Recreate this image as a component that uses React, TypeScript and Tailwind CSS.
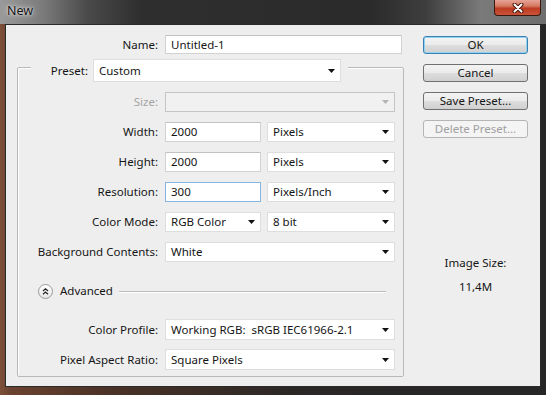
import { ReactNode } from 'react';

const Arrow = ({ disabled }: { disabled?: boolean }) => (
  <svg width="7" height="4" viewBox="0 0 7 4" className="shrink-0">
    <path d="M0 0H7L3.5 4Z" fill={disabled ? '#b4b4b4' : '#111'} />
  </svg>
);

// dropdown box, Photoshop style
const Select = ({ value, width, disabled }: { value?: string; width: string; disabled?: boolean }) => (
  <div
    className={`${width} h-full flex items-center justify-between pl-[5px] pr-[5px] border ${
      disabled ? 'bg-[#f1f1f1] border-[#c4c4c4]' : 'bg-white border-[#dedede]'
    }`}
  >
    <span className="whitespace-pre">{value}</span>
    <Arrow disabled={disabled} />
  </div>
);

const TextBox = ({ value, width, focused }: { value: string; width: string; focused?: boolean }) => (
  <div
    className={`${width} h-full flex items-center pl-[5px] bg-white border ${
      focused ? 'border-[#86b5e6]' : 'border-[#d2d2d2] border-t-[#c2c2c2]'
    }`}
  >
    {value}
  </div>
);

const Row = ({ label, children, disabled, h = 'h-[20px]' }: { label: string; children: ReactNode; disabled?: boolean; h?: string }) => (
  <div className={`flex items-center ${h}`}>
    <span className={`w-[140px] text-right ${disabled ? 'text-[#a5a5a5]' : ''}`}>{label}</span>
    <div className="ml-[7px] h-full flex gap-[6px]">{children}</div>
  </div>
);

const Button = ({ label, primary, disabled }: { label: string; primary?: boolean; disabled?: boolean }) => (
  <div
    className={`w-[105px] h-[18px] flex items-center justify-center rounded-[3px] border bg-[linear-gradient(180deg,#f3f3f3_0%,#ebebeb_48%,#dddddd_52%,#d0d0d0_100%)] ${
      primary
        ? 'border-[#3c7fb1] shadow-[inset_0_0_0_1px_#8fd2f2]'
        : disabled
        ? 'border-[#b5b5b5] text-[#a0a0a0] bg-none bg-[#f4f4f4]'
        : 'border-[#707070]'
    }`}
  >
    {label}
  </div>
);

const App = () => {
  return (
    <div className="w-[546px] h-[395px] flex flex-col overflow-hidden text-[11.5px] text-[#151515] font-['Noto_Sans',sans-serif] bg-[linear-gradient(90deg,#7e5038_0%,#6a4230_2%,#4a3226_20%,#2a2726_55%,#262626_100%)]">
      {/* Title bar */}
      <div className="h-[24px] shrink-0 flex items-start justify-between bg-[linear-gradient(90deg,#9a9a9a_0%,#7a7a7a_8%,#4a4a4a_16%,#2e2e2e_26%,#2b2b2b_68%,#3e3e3e_78%,#7a7a7a_88%,#6e6e6e_100%)]">
        <span className="ml-[7px] mt-[2px] text-[12.5px] text-[#111] [text-shadow:0_0_6px_rgba(255,255,255,0.85),0_0_2px_rgba(255,255,255,0.9)]">
          New
        </span>
        <div className="mr-[5px] w-[47px] h-[16px] flex items-center justify-center rounded-b-[4px] border border-t-0 border-[#3a1810] bg-[linear-gradient(180deg,#e7a496_0%,#d67a64_40%,#bd3c22_55%,#c9533a_100%)]">
          <svg width="12" height="10" viewBox="0 0 12 10">
            <path d="M2.5 1.5L9.5 8.5M9.5 1.5L2.5 8.5" stroke="#4a1a10" strokeWidth="4" strokeLinecap="round" />
            <path d="M2.5 1.5L9.5 8.5M9.5 1.5L2.5 8.5" stroke="#fff" strokeWidth="2" strokeLinecap="round" />
          </svg>
        </div>
      </div>

      {/* Client area */}
      <div className="mx-[5px] mb-[8px] flex-1 flex border border-[#2a2a2a] bg-[#eeeeee]">
        {/* Left column */}
        <div className="w-[398px] pt-[10px] flex flex-col">
          <div className="flex items-center h-[19px]">
            <span className="w-[152px] text-right">Name:</span>
            <div className="ml-[7px] h-full">
              <TextBox value="Untitled-1" width="w-[237px]" />
            </div>
          </div>

          {/* Group box */}
          <div className="ml-[11px] mt-[13px] w-[387px] border border-[#b9b9b9] shadow-[inset_1px_1px_0_#fff] rounded-[2px] pb-[6px] flex flex-col">
            <div className="-mt-[9px] ml-[13px] w-[317px] h-[23px] flex items-center bg-[#eeeeee]">
              <span className="w-[57px] text-right">Preset:</span>
              <div className="ml-[5px] h-full">
                <Select value="Custom" width="w-[248px]" />
              </div>
            </div>

            <div className="mt-[10px] flex flex-col gap-[10px]">
              <Row label="Size:" disabled>
                <Select width="w-[230px]" disabled />
              </Row>
              <Row label="Width:">
                <TextBox value="2000" width="w-[96px]" />
                <Select value="Pixels" width="w-[128px]" />
              </Row>
              <Row label="Height:">
                <TextBox value="2000" width="w-[96px]" />
                <Select value="Pixels" width="w-[128px]" />
              </Row>
              <Row label="Resolution:">
                <TextBox value="300" width="w-[96px]" focused />
                <Select value="Pixels/Inch" width="w-[128px]" />
              </Row>
              <Row label="Color Mode:">
                <Select value="RGB Color" width="w-[96px]" />
                <Select value="8 bit" width="w-[128px]" />
              </Row>
              <Row label="Background Contents:">
                <Select value="White" width="w-[230px]" />
              </Row>
            </div>

            {/* Advanced */}
            <div className="mt-[22px] h-[14px] flex items-center">
              <div className="ml-[20px] w-[15px] h-[15px] shrink-0 rounded-full border border-[#9a9a9a] bg-[linear-gradient(180deg,#ffffff_0%,#e6e6e6_100%)] flex items-center justify-center">
                <svg width="7" height="7" viewBox="0 0 7 7">
                  <path d="M1 3L3.5 0.8L6 3M1 6.2L3.5 4L6 6.2" fill="none" stroke="#222" strokeWidth="1.2" />
                </svg>
              </div>
              <span className="ml-[7px]">Advanced</span>
              <div className="ml-[6px] mr-[17px] flex-1 h-px bg-[#bdbdbd] shadow-[0_1px_0_#fff]" />
            </div>

            <div className="mt-[21px] flex flex-col gap-[9px]">
              <Row label="Color Profile:" h="h-[21px]">
                <Select value="Working RGB:  sRGB IEC61966-2.1" width="w-[230px]" />
              </Row>
              <Row label="Pixel Aspect Ratio:" h="h-[21px]">
                <Select value="Square Pixels" width="w-[230px]" />
              </Row>
            </div>
          </div>
        </div>

        {/* Right column */}
        <div className="ml-[19px] pt-[11px] flex flex-col">
          <div className="flex flex-col gap-[10px]">
            <Button label="OK" primary />
            <Button label="Cancel" />
            <Button label="Save Preset..." />
            <Button label="Delete Preset..." disabled />
          </div>
          <div className="mt-[116px] flex flex-col items-center gap-[7px]">
            <span>Image Size:</span>
            <span>11,4M</span>
          </div>
        </div>
      </div>
    </div>
  );
};

export default App;
